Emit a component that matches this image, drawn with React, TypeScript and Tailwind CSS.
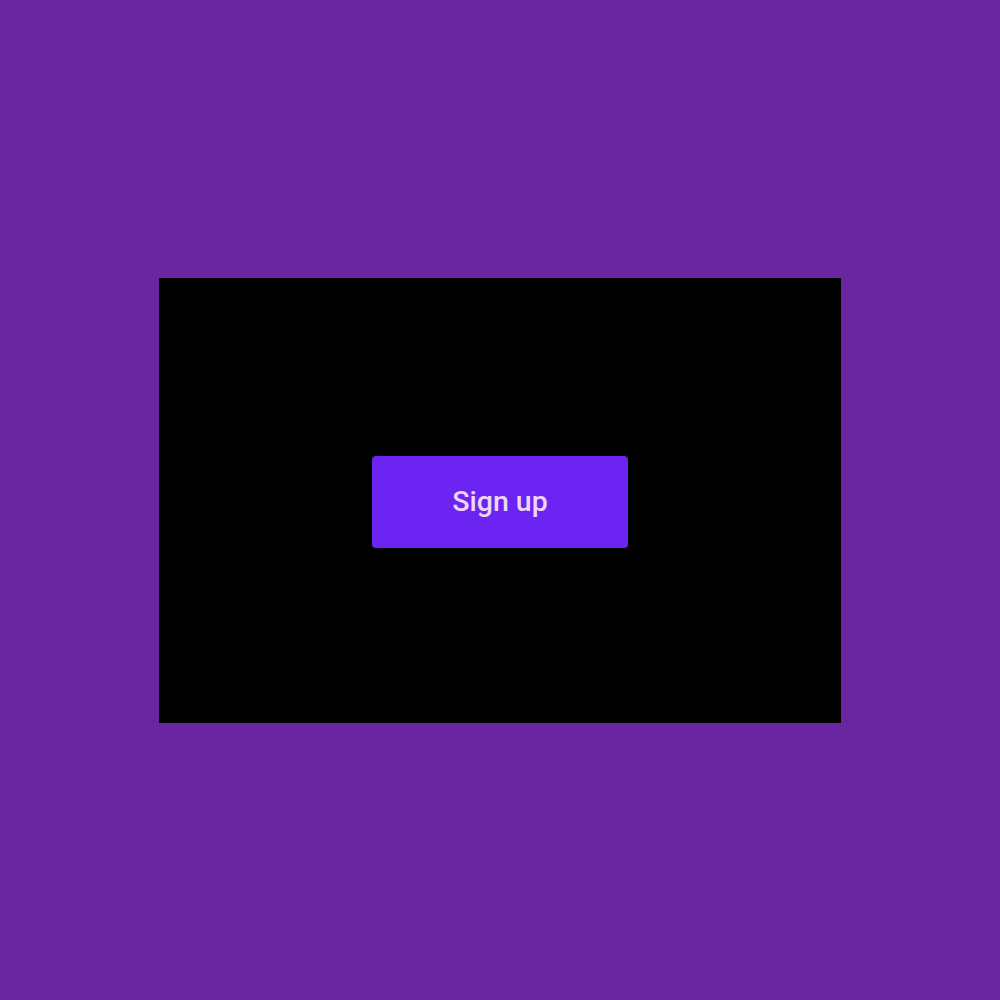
export default function App() {
  return (
    <div className="flex h-[1000px] w-[1000px] items-center justify-center bg-[#6a25a0]">
      <div className="flex h-[445px] w-[682px] items-center justify-center bg-black pt-[4px]">
        <button className="flex h-[92px] w-[256px] items-center justify-center rounded-[4px] bg-[#6c24f2] font-['Roboto',sans-serif] text-[28.5px] font-medium text-[#ecd6f2]">
          Sign up
        </button>
      </div>
    </div>
  );
}
